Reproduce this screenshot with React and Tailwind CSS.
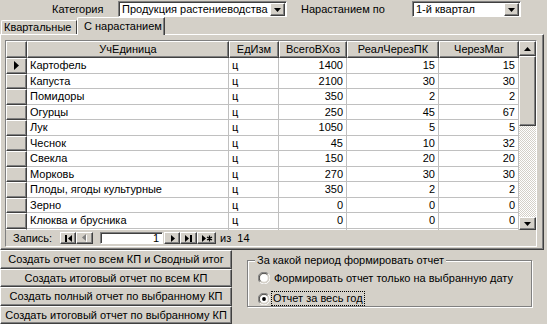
import React from "react";

const rows = [
  ["Картофель", "ц", 1400, 15, 15],
  ["Капуста", "ц", 2100, 30, 30],
  ["Помидоры", "ц", 350, 2, 2],
  ["Огурцы", "ц", 250, 45, 67],
  ["Лук", "ц", 1050, 5, 5],
  ["Чеснок", "ц", 45, 10, 32],
  ["Свекла", "ц", 150, 20, 20],
  ["Морковь", "ц", 270, 30, 30],
  ["Плоды, ягоды культурные", "ц", 350, 2, 2],
  ["Зерно", "ц", 0, 0, 0],
  ["Клюква и брусника", "ц", 0, 0, 0],
];

const cols = [
  { title: "УчЕдиница", w: "w-[202px]", right: false },
  { title: "ЕдИзм", w: "w-[50px]", right: false },
  { title: "ВсегоВХоз", w: "w-[68px]", right: true },
  { title: "РеалЧерезПК", w: "w-[92px]", right: true },
  { title: "ЧерезМаг", w: "w-[80px]", right: true },
];

const raised =
  "bg-[#d4d0c8] border border-t-white border-l-white border-r-[#404040] border-b-[#404040] shadow-[inset_-1px_-1px_0_#808080]";

function Arrow({ dir = "down", color = "#000" }) {
  const d = dir === "down" ? "M0 0H7L3.5 4Z" : "M0 4H7L3.5 0Z";
  return (
    <svg width="7" height="4" viewBox="0 0 7 4">
      <path d={d} fill={color} />
    </svg>
  );
}

function Combo({ value, w }) {
  return (
    <div className={`${w} h-[16px] flex bg-white border border-t-[#808080] border-l-[#808080] border-b-white border-r-white shadow-[inset_1px_1px_0_#404040]`}>
      <div className="flex-1 pl-[3px] pt-[1px] leading-[13px] whitespace-nowrap overflow-hidden">{value}</div>
      <div className={`w-[15px] h-[13px] mt-[1px] mr-[1px] flex items-center justify-center ${raised}`}>
        <Arrow />
      </div>
    </div>
  );
}

function NavBtn({ kind, w = "w-[16px]" }) {
  const icons = {
    first: (
      <svg width="9" height="7" viewBox="0 0 9 7">
        <rect x="1" y="0" width="2" height="7" fill="#000" />
        <path d="M8 0V7L4 3.5Z" fill="#000" />
      </svg>
    ),
    prev: (
      <svg width="9" height="8" viewBox="0 0 9 8">
        <path d="M6 0V7L2 3.5Z" fill="#808080" />
        <path d="M6.5 1V8" stroke="#fff" />
      </svg>
    ),
    next: (
      <svg width="9" height="7" viewBox="0 0 9 7">
        <path d="M3 0V7L7 3.5Z" fill="#000" />
      </svg>
    ),
    last: (
      <svg width="9" height="7" viewBox="0 0 9 7">
        <path d="M1 0V7L5 3.5Z" fill="#000" />
        <rect x="6" y="0" width="2" height="7" fill="#000" />
      </svg>
    ),
    new: (
      <svg width="12" height="7" viewBox="0 0 12 7">
        <path d="M1 0V7L5 3.5Z" fill="#000" />
        <path d="M8.5 0.5V6.5M6 2L11 5M11 2L6 5" stroke="#000" strokeWidth="1.3" />
      </svg>
    ),
  };
  return (
    <div className={`${w} h-[12px] flex items-center justify-center ${raised}`}>
      {icons[kind]}
    </div>
  );
}

function Radio({ checked }) {
  return (
    <svg width="12" height="12" viewBox="0 0 12 12">
      <path d="M1.8 10.2A5.9 5.9 0 0 1 10.2 1.8" stroke="#808080" fill="none" />
      <path d="M10.2 1.8A5.9 5.9 0 0 1 1.8 10.2" stroke="#fff" fill="none" />
      <path d="M2.6 9.4A4.8 4.8 0 0 1 9.4 2.6" stroke="#404040" fill="none" />
      <path d="M9.4 2.6A4.8 4.8 0 0 1 2.6 9.4" stroke="#d4d0c8" fill="none" />
      <circle cx="6" cy="6" r="3.8" fill="#fff" />
      {checked && <circle cx="6" cy="6" r="1.9" fill="#000" />}
    </svg>
  );
}

export default function App() {
  return (
    <div className="w-[547px] h-[324px] overflow-hidden bg-[#d4d0c8] text-black text-[11px] font-['Liberation_Sans',Arial,sans-serif] flex flex-col">
      {/* TOP FILTERS */}
      <div className="h-[17px] flex items-start pt-[1px] pl-[52px]">
        <div className="w-[66px] pt-[1px] leading-[14px]">Категория</div>
        <Combo value="Продукция растениеводства" w="w-[169px]" />
        <div className="w-[125px] pl-[14px] pt-[1px] leading-[14px]">Нарастанием по</div>
        <Combo value="1-й квартал" w="w-[109px]" />
      </div>

      {/* TABS */}
      <div className="h-[17px] flex items-end pl-[1px]">
        <div className="w-[76px] h-[14px] border-t border-l border-t-white border-l-white border-r border-r-[#404040] rounded-tl-[2px] leading-[13px] pl-[2px]">
          Квартальные
        </div>
        <div className="w-[88px] h-[18px] -mb-[1px] relative z-10 bg-[#d4d0c8] border-t border-l border-t-white border-l-white border-r border-r-[#404040] shadow-[inset_-1px_0_0_#808080] rounded-tl-[2px] leading-[14px] pl-[6px] pt-[1px]">
          С нарастанием
        </div>
      </div>

      {/* TAB PANEL */}
      <div className={`w-[544px] h-[216px] pl-[4px] pt-[5px] ${raised}`}>
        <div className="w-[532px] h-[207px] border-l border-t border-[#808080] border-r border-r-white border-b border-b-white flex flex-col">
          {/* DATASHEET */}
          <div className="h-[189px] flex">
            <div className="w-[513px] overflow-hidden flex flex-col">
              <div className="h-[17px] flex shrink-0">
                <div className={`w-[21px] h-full ${raised}`} />
                {cols.map((c) => (
                  <div
                    key={c.title}
                    className={`${c.w} h-full flex items-center justify-center ${raised}`}
                  >
                    {c.title}
                  </div>
                ))}
              </div>
              {rows.map((r, i) => (
                <div key={i} className="h-[15.5px] flex shrink-0">
                  <div className={`w-[21px] h-full flex items-center justify-center ${raised}`}>
                    {i === 0 && (
                      <svg width="5" height="9" viewBox="0 0 5 9">
                        <path d="M0 0V9L5 4.5Z" fill="#000" />
                      </svg>
                    )}
                  </div>
                  {cols.map((c, j) => (
                    <div
                      key={j}
                      className={`${c.w} h-full bg-white border-r border-b border-[#c0c0c0] px-[3px] flex items-center leading-[14px] whitespace-nowrap ${c.right ? "justify-end" : ""}`}
                    >
                      {r[j]}
                    </div>
                  ))}
                </div>
              ))}
              {/* partially visible next row */}
              <div className="flex-1 flex">
                <div className={`w-[21px] h-full ${raised}`} />
                {cols.map((c, j) => (
                  <div key={j} className={`${c.w} h-full bg-white border-r border-[#c0c0c0]`} />
                ))}
              </div>
            </div>
            {/* SCROLLBAR */}
            <div className="w-[17px] flex flex-col">
              <div className={`h-[15px] flex items-center justify-center ${raised}`}>
                <Arrow dir="up" />
              </div>
              <div className={`h-[70px] ${raised}`} />
              <div className="flex-1 bg-[repeating-conic-gradient(#d4d0c8_0_25%,#ffffff_0_50%)] bg-[length:2px_2px]" />
              <div className={`h-[13px] flex items-center justify-center ${raised}`}>
                <Arrow />
              </div>
            </div>
          </div>

          {/* NAVIGATION */}
          <div className="flex-1 flex items-center pl-[7px]">
            <div className="w-[47px]">Запись:</div>
            <NavBtn kind="first" />
            <NavBtn kind="prev" w="w-[17px]" />
            <div className="w-[63px] h-[12px] ml-[7px] bg-white border border-t-[#808080] border-l-[#808080] border-b-white border-r-white shadow-[inset_1px_1px_0_#404040] text-right pr-[3px] leading-[10px]">
              1
            </div>
            <div className="ml-[1px]">
              <NavBtn kind="next" />
            </div>
            <NavBtn kind="last" w="w-[17px]" />
            <NavBtn kind="new" w="w-[19px]" />
            <div className="ml-[4px]">из&nbsp; 14</div>
          </div>
        </div>
      </div>

      {/* BOTTOM */}
      <div className="flex-1 flex">
        <div className="w-[232px] flex flex-col">
          {[
            "Создать отчет по всем КП и Сводный итог",
            "Создать итоговый отчет по всем КП",
            "Создать полный отчет по выбранному КП",
            "Создать итоговый отчет по выбранному КП",
          ].map((t) => (
            <div
              key={t}
              className={`flex-1 flex items-center justify-center whitespace-nowrap ${raised}`}
            >
              {t}
            </div>
          ))}
        </div>
        <div className="flex-1 pl-[15px] pt-[10px]">
          <div className="relative w-[285px] h-[47px] border border-[#808080] shadow-[1px_1px_0_#fff,inset_1px_1px_0_#fff]">
            <div className="absolute -top-[8px] left-[7px] px-[2px] bg-[#d4d0c8] leading-[14px]">
              За какой период формировать отчет
            </div>
            <div className="pt-[10px] pl-[10px] flex flex-col gap-[6px]">
              <div className="flex items-center gap-[3px] h-[14px]">
                <Radio />
                <span className="pl-[1px]">Формировать отчет только на выбранную дату</span>
              </div>
              <div className="flex items-center gap-[1px] h-[15px]">
                <Radio checked />
                <span className="border border-dotted border-black px-[1px] leading-[13px]">
                  Отчет за весь год
                </span>
              </div>
            </div>
          </div>
        </div>
      </div>
    </div>
  );
}
